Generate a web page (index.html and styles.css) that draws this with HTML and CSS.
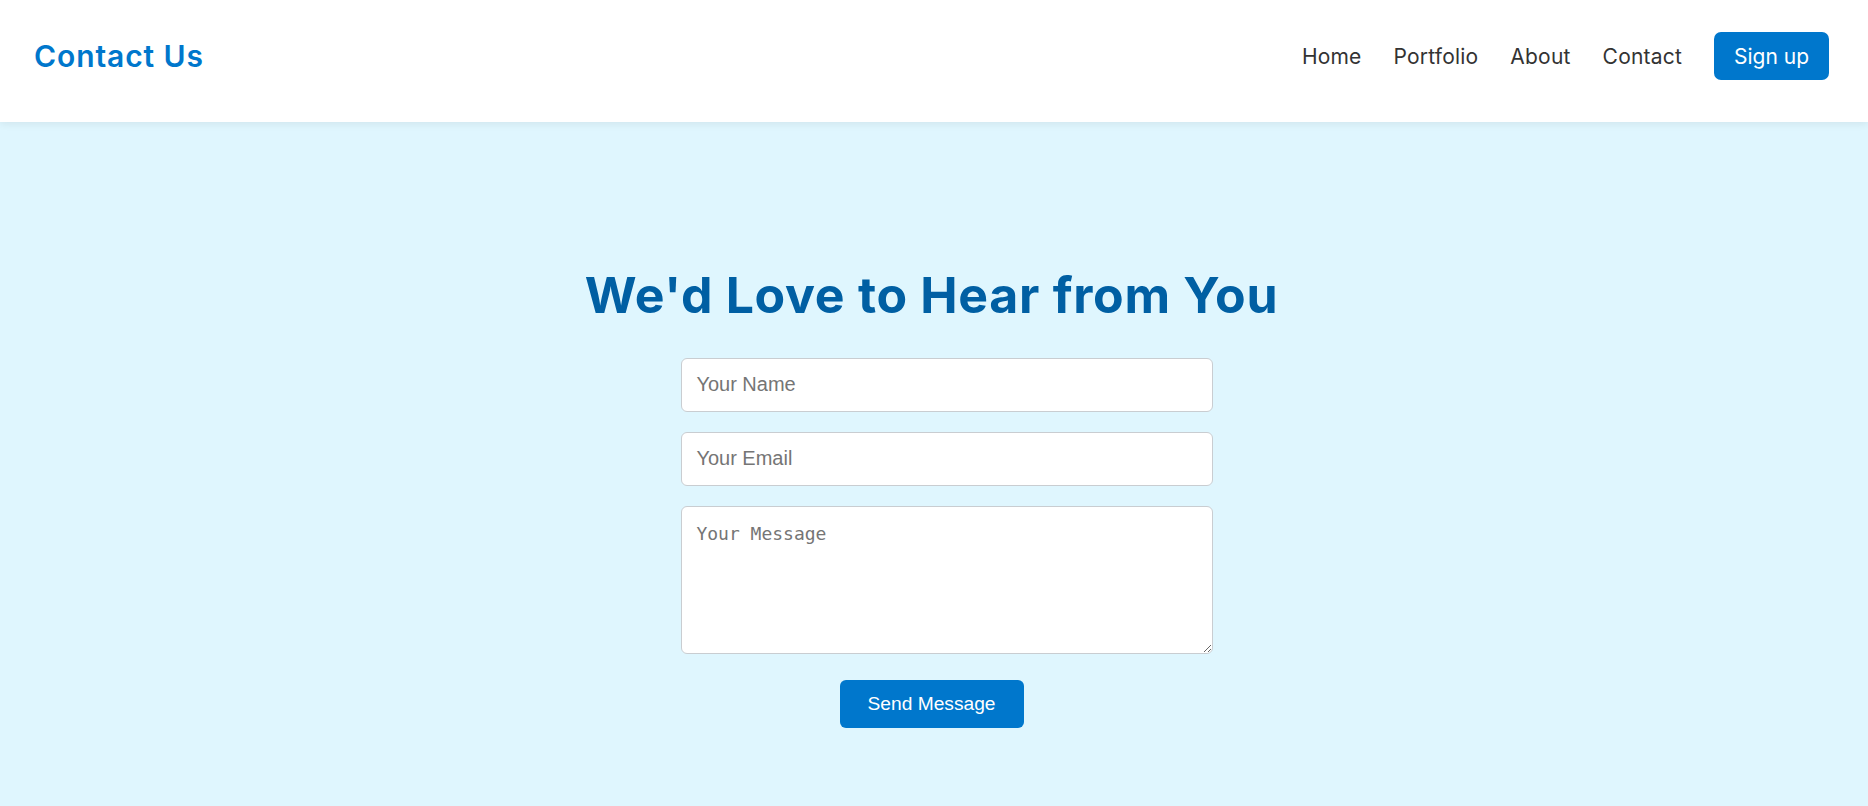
FILE: index.html
```html
<!DOCTYPE html>
<html lang="en">
<head>
<meta charset="utf-8">
<title>Contact Us</title>
<link rel="stylesheet" href="styles.css">
</head>
<body>
<header class="site-header">
  <div class="logo">Contact Us</div>
  <nav class="nav">
    <a class="nav-link" href="#">Home</a>
    <a class="nav-link" href="#">Portfolio</a>
    <a class="nav-link" href="#">About</a>
    <a class="nav-link" href="#">Contact</a>
    <a class="nav-btn" href="#">Sign up</a>
  </nav>
</header>
<main class="contact">
  <h1 class="contact-title">We'd Love to Hear from You</h1>
  <form class="contact-form">
    <input class="field" type="text" placeholder="Your Name">
    <input class="field" type="email" placeholder="Your Email">
    <textarea class="field field-area" placeholder="Your Message"></textarea>
    <button class="send-btn" type="button">Send Message</button>
  </form>
</main>
</body>
</html>
```
FILE: styles.css
```css
* { box-sizing: border-box; }
html, body { margin: 0; padding: 0; height: 100%; }
body {
  font-family: "Inter", "Liberation Sans", sans-serif;
  background: #dff6fe;
  display: flex;
  flex-direction: column;
}
.site-header {
  height: 122px;
  flex: 0 0 auto;
  background: #ffffff;
  display: flex;
  align-items: center;
  justify-content: space-between;
  padding: 0 39px 10px 34px;
  box-shadow: 0 2px 8px rgba(0, 0, 0, 0.07);
  position: relative;
  z-index: 1;
}
.logo {
  font-size: 30px;
  font-weight: 600;
  letter-spacing: 0.9px;
  color: #0077cc;
}
.nav {
  display: flex;
  align-items: center;
  gap: 32px;
}
.nav-link {
  font-size: 21px;
  letter-spacing: 0.2px;
  color: #333333;
  text-decoration: none;
}
.nav-btn {
  font-size: 21px;
  color: #ffffff;
  background: #0077cc;
  text-decoration: none;
  height: 48px;
  padding: 0 20px;
  border-radius: 7px;
  display: flex;
  align-items: center;
}
.contact {
  flex: 1 1 auto;
  display: flex;
  flex-direction: column;
  align-items: center;
  padding: 143px 5px 0 0;
}
.contact-title {
  margin: 0 0 33px;
  font-size: 50px;
  font-weight: 700;
  letter-spacing: 0.7px;
  color: #005fa3;
  line-height: 1.2;
}
.contact-form {
  width: 501px;
  display: flex;
  flex-direction: column;
  gap: 20px;
}
.field {
  box-sizing: content-box;
  width: 100%;
  height: 23.2px;
  border: 1px solid #c9cdd1;
  border-radius: 6px;
  background: #fff;
  padding: 14.4px;
  font-family: "Liberation Sans", Arial, sans-serif;
  font-size: 20px;
  color: #333;
}
.field::placeholder { color: #757575; }
.field-area {
  height: 116px;
  padding-top: 16px;
  font-family: "DejaVu Sans Mono", monospace;
  font-size: 18px;
  resize: vertical;
}
.send-btn {
  align-self: center;
  margin-top: 6px;
  height: 48px;
  padding: 0 28px;
  border: none;
  border-radius: 6px;
  background: #0077cc;
  color: #fff;
  font-family: "Liberation Sans", Arial, sans-serif;
  font-size: 19.2px;
}
```
